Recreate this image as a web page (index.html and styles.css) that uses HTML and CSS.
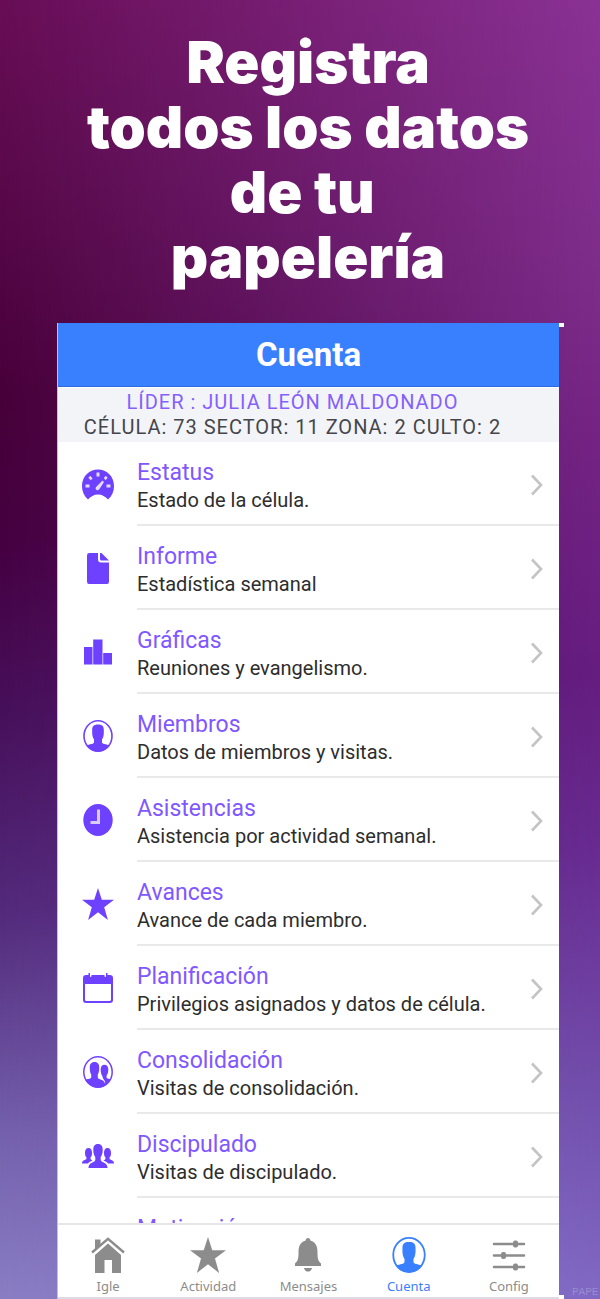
FILE: index.html
```html
<!DOCTYPE html>
<html lang="es">
<head>
<meta charset="utf-8">
<meta name="viewport" content="width=device-width, initial-scale=1">
<title>Registra todos los datos de tu papelería</title>
<link rel="stylesheet" href="styles.css">
</head>
<body>
<svg class="sprite" aria-hidden="true">
  <symbol id="chevron" viewBox="0 0 12 22"><path d="M1 1.500L10 11L1 20.500" fill="none" stroke="currentColor" stroke-width="2.600"/></symbol>
  <symbol id="star" viewBox="0 0 32 32"><path d="M16 0L19.800 11.700H32L22.200 19.200L25.900 32L16 24.300L6.100 32L9.800 19.200L0 11.700H12.200Z"/></symbol>
  <symbol id="contact" viewBox="0 0 32 32">
    <ellipse cx="16" cy="16" rx="14" ry="15.200" fill="none" stroke="currentColor" stroke-width="1.600"/>
    <path d="M16 4.500C20.500 4.500 22 6.500 21.800 10.500C22 14.500 21.500 17.500 20 19.500V22.500C21 24.800 26 24 27.500 26C24.500 29.800 20.500 31.500 16 31.500S7.500 29.800 4.500 26C6 24 11 24.800 12 22.500V19.500C10.500 17.500 10 14.500 10.200 10.500C10 6.500 11.500 4.500 16 4.500Z"/>
  </symbol>
</svg>

<div class="poster">
  <h1 class="headline">Registra<br>todos los datos<br>de tu&nbsp;<br>papelería</h1>

  <div class="phone">
    <header class="topbar"><h2 class="topbar-title">Cuenta</h2></header>
    <div class="summary">
      <p class="summary-leader">LÍDER : JULIA LEÓN MALDONADO</p>
      <p class="summary-cell">CÉLULA: 73 SECTOR: 11 ZONA: 2 CULTO: 2</p>
    </div>

    <main class="menu">
      <a class="item" href="#estatus">
        <svg class="item-icon" viewBox="0 0 32 32"><path d="M6 31.500C2 28 0 23.500 0 18C0 8.500 7 1.500 16 1.500S32 8.500 32 18C32 23.500 30 28 26 31.500C23.500 28.500 20 26.500 16 26.500S8.500 28.500 6 31.500Z"/><g fill="#e4dbff"><rect x="14.500" y="4.500" width="3" height="4"/><rect x="3.500" y="16.500" width="4" height="3"/><rect x="24.500" y="16.500" width="4" height="3"/><path d="M6.300 9.700L8.300 7.700L10.600 10.500L8.700 12.300ZM25.700 9.700L23.700 7.700L21.800 10L23.500 12.200ZM14 19L20.500 12.500L22 14L17.500 21C15.500 23.500 12.500 22 14 19Z"/></g></svg>
        <span class="item-text"><span class="item-title">Estatus</span><span class="item-note">Estado de la célula.</span></span>
        <svg class="chevron"><use href="#chevron"/></svg>
      </a>
      <a class="item" href="#informe">
        <svg class="item-icon" viewBox="0 0 32 32"><path d="M7 1H16V7C16 9.500 17 10.500 19 10.500H27V29.500Q27 32 25 32H7Q5 32 5 29.500V3.500Q5 1 7 1ZM18 1H19.500L27 8.500H19.500Q18 8.500 18 7Z"/></svg>
        <span class="item-text"><span class="item-title">Informe</span><span class="item-note">Estadística semanal</span></span>
        <svg class="chevron"><use href="#chevron"/></svg>
      </a>
      <a class="item" href="#graficas">
        <svg class="item-icon" viewBox="0 0 32 32"><path d="M2 11H10.500V28.500H2ZM11.200 3.500H20.500V28.500H11.200ZM21.200 17H30V28.500H21.200Z"/></svg>
        <span class="item-text"><span class="item-title">Gráficas</span><span class="item-note">Reuniones y evangelismo.</span></span>
        <svg class="chevron"><use href="#chevron"/></svg>
      </a>
      <a class="item" href="#miembros">
        <svg class="item-icon"><use href="#contact"/></svg>
        <span class="item-text"><span class="item-title">Miembros</span><span class="item-note">Datos de miembros y visitas.</span></span>
        <svg class="chevron"><use href="#chevron"/></svg>
      </a>
      <a class="item" href="#asistencias">
        <svg class="item-icon" viewBox="0 0 32 32"><ellipse cx="16" cy="16" rx="14.700" ry="16"/><path d="M16.500 5.500V18.500H8.500" fill="none" stroke="#d8ccff" stroke-width="3"/></svg>
        <span class="item-text"><span class="item-title">Asistencias</span><span class="item-note">Asistencia por actividad semanal.</span></span>
        <svg class="chevron"><use href="#chevron"/></svg>
      </a>
      <a class="item" href="#avances">
        <svg class="item-icon"><use href="#star"/></svg>
        <span class="item-text"><span class="item-title">Avances</span><span class="item-note">Avance de cada miembro.</span></span>
        <svg class="chevron"><use href="#chevron"/></svg>
      </a>
      <a class="item" href="#planificacion">
        <svg class="item-icon" viewBox="0 0 32 32"><path fill-rule="evenodd" d="M4 3H6.500V1H8V3.500C8 5.500 9.500 5.500 9.500 3.500V3H22.500V3.500C22.500 5.500 24 5.500 24 3.500V1H25.500V3H28Q31 3 31 6V28Q31 31 28 31H4Q1 31 1 28V6Q1 3 4 3ZM3 12V27.500Q3 29 4.500 29H27.500Q29 29 29 27.500V12Z"/></svg>
        <span class="item-text"><span class="item-title">Planificación</span><span class="item-note">Privilegios asignados y datos de célula.</span></span>
        <svg class="chevron"><use href="#chevron"/></svg>
      </a>
      <a class="item" href="#consolidacion">
        <svg class="item-icon" viewBox="0 0 32 32"><ellipse cx="16" cy="16" rx="14.200" ry="15.200" fill="none" stroke="currentColor" stroke-width="1.500"/><path d="M12.500 6C16 6 17.400 8.500 17.200 12C17.200 15 16.800 17 15.800 18.500V21.500C16.500 23.500 20 23.500 21.500 25L23.500 28L22.500 24.500C21.500 23 20.700 22.500 20.500 20.500C19 18 18.700 16 18.700 13.500C18.700 10.500 20 8.800 22.300 8.800C25 8.800 26.300 10.500 26.300 13.500C26.300 16 25.800 18 24.600 19.500V21.500C24.800 23 27.500 22.500 28.500 23.500C26 28.500 21.500 31.500 16 31.500S6 28.500 3.500 24C5 22.500 8.500 23.500 9.200 21.500V18.500C8.200 17 7.800 15 7.800 12C7.600 8.500 9 6 12.500 6Z"/></svg>
        <span class="item-text"><span class="item-title">Consolidación</span><span class="item-note">Visitas de consolidación.</span></span>
        <svg class="chevron"><use href="#chevron"/></svg>
      </a>
      <a class="item" href="#discipulado">
        <svg class="item-icon" viewBox="0 0 32 32"><path d="M16 4C19.500 4 20.800 6.500 20.700 10C20.700 13 20 15.500 18.700 17V20C19.500 23 25.500 22 25.500 28H6.500C6.500 22 12.500 23 13.300 20V17C12 15.500 11.300 13 11.300 10C11.200 6.500 12.500 4 16 4ZM6.500 8C9 8 10 10 10 13C10 15 9.500 16.500 8.500 17.500C8.500 19.500 9 20 10.500 20.500C8.500 21.500 7 22 6 23.500H0C0 19.500 4 20.500 4.500 18.500V17.500C3.500 16.500 3 15 3 13C3 10 4 8 6.500 8ZM25.500 8C28 8 29 10 29 13C29 15 28.500 16.500 27.500 17.500V18.500C28 20.500 32 19.500 32 23.500H26C25 22 23.500 21.500 21.500 20.500C23 20 23.500 19.500 23.500 17.500C22.500 16.500 22 15 22 13C22 10 23 8 25.500 8Z"/></svg>
        <span class="item-text"><span class="item-title">Discipulado</span><span class="item-note">Visitas de discipulado.</span></span>
        <svg class="chevron"><use href="#chevron"/></svg>
      </a>
      <a class="item" href="#motivacion">
        <span class="item-icon"></span>
        <span class="item-text"><span class="item-title">Motivación</span></span>
      </a>
    </main>

    <nav class="tabs">
      <a class="tab" href="#igle"><svg class="tab-icon" viewBox="0 0 36 36"><path d="M5 18L18 6.500L31 18V36H22V23H14.500V36H5Z"/><path d="M5 13V2.500H10.500V8Z"/><path d="M2 15.500L18 1.800L34 15.500" fill="none" stroke="currentColor" stroke-width="2.400"/></svg>Igle</a>
      <a class="tab" href="#actividad"><svg class="tab-icon"><use href="#star"/></svg>Actividad</a>
      <a class="tab" href="#mensajes"><svg class="tab-icon" viewBox="0 0 36 36"><path d="M18 1C19.500 1 20.300 2 20.300 3.500C26 5 27.500 10 27.500 15C27.500 22 28 23.500 31 26.500V29H5V26.500C8 23.500 8.500 22 8.500 15C8.500 10 10 5 15.700 3.500C15.700 2 16.500 1 18 1ZM14 31H22C21.500 33.500 20 34.500 18 34.500S14.500 33.500 14 31Z"/></svg>Mensajes</a>
      <a class="tab tab-active" href="#cuenta" aria-current="page"><svg class="tab-icon"><use href="#contact"/></svg>Cuenta</a>
      <a class="tab" href="#config"><svg class="tab-icon" viewBox="0 0 36 36"><path d="M3 7H33M3 18.500H33M3 30H33" fill="none" stroke="currentColor" stroke-width="2.600" stroke-linecap="round"/><rect x="22" y="3.500" width="5" height="7" rx="2"/><rect x="10" y="15" width="5" height="7" rx="2"/><rect x="22" y="26.500" width="5" height="7" rx="2"/></svg>Config</a>
    </nav>
  </div>
  <span class="watermark">PAPE</span>
</div>
</body>
</html>
```
FILE: styles.css
```css
* { box-sizing: border-box; }

body {
  margin: 0;
  font-family: Roboto, "Liberation Sans", sans-serif;
}

h1, h2, p { margin: 0; }
a { color: inherit; text-decoration: none; }
svg { fill: currentColor; }

.sprite { display: none; }

.poster {
  position: relative;
  isolation: isolate;
  display: flex;
  flex-direction: column;
  height: 100vh;
  overflow: hidden;
  padding: 30px 41px 0 57px;
  background: linear-gradient(176deg, #680d56 0%, #5b0a4c 12%, #470039 30%, #450040 40%, #47105a 53%, #532a7c 68%, #7562ae 85%, #9085ca 100%);
}

/* Right-hand colours, faded in from left to right */
.poster::before {
  content: "";
  position: absolute;
  inset: 0;
  z-index: -1;
  background: linear-gradient(#8a3295 0%, #7d2c8a 22%, #742384 34%, #651d80 52%, #682a90 65%, #7350ad 85%, #8069c4 100%);
  mask-image: linear-gradient(to right, transparent, #000);
}

.headline {
  color: #fff;
  font-family: "Arial Black", Inter, sans-serif;
  font-size: 58px;
  font-weight: 900;
  line-height: 65px;
  text-align: center;
  white-space: nowrap;
}

.phone {
  position: relative;
  flex: 1;
  min-height: 0;
  display: flex;
  flex-direction: column;
  margin-top: 33px;
  border-left: 1px solid #c9bfd4;
  background: #fff;
}

/* White corner marks beside the right edge */
.phone::before,
.phone::after {
  content: "";
  position: absolute;
  left: 100%;
  width: 5px;
  height: 4px;
  background: #fff;
}

.phone::before { top: 0; }
.phone::after { bottom: 0; }

.topbar {
  display: grid;
  place-items: center;
  height: 64px;
  border-bottom: 1px solid #2f6bdc;
  background: #3880ff;
  color: #fff;
}

.topbar-title {
  font-size: 33px;
  font-weight: 700;
  line-height: 40px;
}

.summary {
  margin-top: 1px;
  padding: 2px 32px 2px 0;
  background: #f3f4f8;
  font-size: 20px;
  line-height: 25px;
  letter-spacing: 1px;
  text-align: center;
  white-space: nowrap;
}

.summary-leader { color: #8560fc; }
.summary-cell { color: #45464b; }

.menu {
  flex: 1;
  min-height: 0;
  overflow: hidden;
}

.item {
  display: flex;
  align-items: center;
  height: 84px;
  padding-left: 24px;
}

.item-icon {
  flex: none;
  width: 32px;
  height: 32px;
  color: #6e40ff;
}

.item-text {
  flex: 1;
  align-self: stretch;
  display: flex;
  flex-direction: column;
  margin-left: 23px;
  padding-top: 17px;
  border-bottom: 2px solid #e9e9eb;
  white-space: nowrap;
}

.item-title {
  color: #8158ff;
  font-size: 23px;
  line-height: 28px;
}

.item-note {
  color: #2d2d2d;
  font-size: 20px;
  line-height: 26px;
}

.chevron {
  align-self: stretch;
  width: 28px;
  height: 84px;
  padding: 32px 16px 28px 0;
  border-bottom: 2px solid #e9e9eb;
  color: #c4c4c6;
}

.tabs {
  display: grid;
  grid-template-columns: repeat(5, 1fr);
  height: 76px;
  padding-top: 12px;
  border-top: 2px solid #e6e6e8;
  border-bottom: 2px solid #dddbe6;
  color: #8c8c8c;
}

.tab {
  display: flex;
  flex-direction: column;
  align-items: center;
  font-family: "Noto Sans", sans-serif;
  font-size: 13px;
  line-height: 26px;
}

.tab-icon { width: 36px; height: 36px; }
.tab-active { color: #3880ff; }

.watermark {
  position: absolute;
  left: calc(100% - 28px);
  bottom: 0;
  color: #9a8bd0;
  font-family: "Liberation Mono", monospace;
  font-size: 11px;
  line-height: 14px;
}
```
